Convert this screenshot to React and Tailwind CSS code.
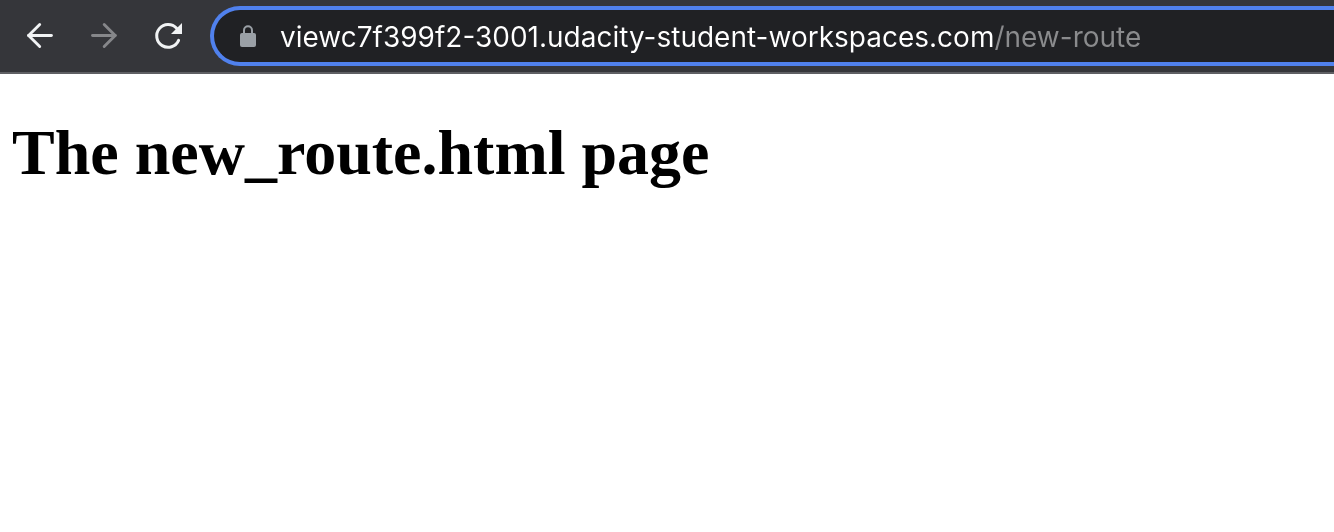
import { useState } from "react";

function BackIcon() {
  return (
    <svg className="size-8" viewBox="0 0 32 32" fill="none" stroke="currentColor" strokeWidth="2.9" strokeLinecap="round" strokeLinejoin="round" aria-hidden="true">
      <path d="M27.4 15.5H4.6" />
      <path d="M15.7 4.5L4.6 15.5L15.7 26.5" />
    </svg>
  );
}

function ForwardIcon() {
  return (
    <svg className="size-8" viewBox="0 0 32 32" fill="none" stroke="currentColor" strokeWidth="2.9" strokeLinecap="round" strokeLinejoin="round" aria-hidden="true">
      <path d="M4.5 15.5H27.2" />
      <path d="M16.2 4.5L27.2 15.5L16.2 26.5" />
    </svg>
  );
}

function ReloadIcon() {
  return (
    <svg className="size-8" viewBox="0 0 32 32" aria-hidden="true">
      <path d="M26.6 20.4A11.4 11.4 0 1 1 24.6 8.3" fill="none" stroke="currentColor" strokeWidth="3" strokeLinecap="round" />
      <path d="M30 3V14H19Z" fill="currentColor" />
    </svg>
  );
}

function LockIcon() {
  return (
    <svg className="h-6 w-4 shrink-0" viewBox="0 0 16 24" aria-hidden="true">
      <path d="M4 10V6.2a4 4 0 0 1 8 0V10" fill="none" stroke="currentColor" strokeWidth="2" />
      <rect x="0" y="9" width="16" height="14" rx="2" fill="currentColor" />
    </svg>
  );
}

export default function App() {
  const [url, setUrl] = useState("viewc7f399f2-3001.udacity-student-workspaces.com/new-route");

  return (
    <div className="min-h-screen overflow-x-hidden bg-white">
      <header className="flex items-center border-b-2 border-[#5f6064] bg-[#35363a] py-1.5 pl-6 text-[#f1f3f4]">
        <nav className="flex shrink-0 gap-8 pr-[26px]" aria-label="Browser controls">
          <button type="button" aria-label="Back">
            <BackIcon />
          </button>
          <button type="button" aria-label="Forward" disabled className="text-[#86878a]">
            <ForwardIcon />
          </button>
          <button type="button" aria-label="Reload">
            <ReloadIcon />
          </button>
        </nav>
        <label className="flex h-[60px] min-w-0 flex-1 items-center gap-6 rounded-l-full border-y-4 border-l-4 border-[#5081ed] bg-[#202124] pl-[26px] text-[#9aa0a6]">
          <LockIcon />
          <input
            type="text"
            aria-label="Address"
            value={url}
            onChange={(event) => setUrl(event.target.value)}
            className="h-10 min-w-0 flex-1 bg-[linear-gradient(90deg,#ffffff_715px,#8a8b8d_715px)] bg-clip-text pt-0.5 font-['Inter',sans-serif] text-[28px] text-transparent caret-white outline-none"
          />
        </label>
      </header>
      <main className="px-3 py-[43px]">
        <h1 className="font-['Liberation_Serif',serif] text-[64px] leading-[72px] font-bold text-black">
          The new_route.html page
        </h1>
      </main>
    </div>
  );
}
